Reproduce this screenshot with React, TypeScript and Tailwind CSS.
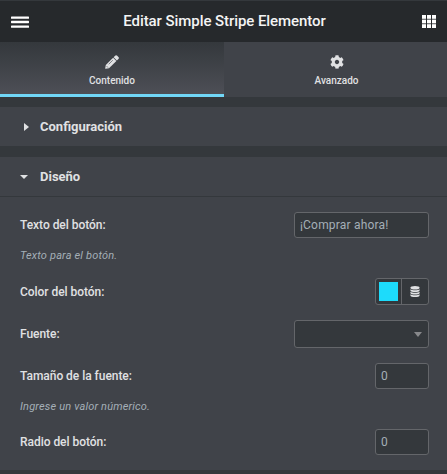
import type { ReactNode } from "react";
import { FaCog } from "react-icons/fa";

const field =
  "block h-[26px] rounded-[3px] border border-[#64666a] bg-[#34383c] px-[5px] text-[12px] tracking-[0.19px] text-[#a4afb7] outline-none";

function Row({ label, height, children }: { label: string; height: string; children: ReactNode }) {
  return (
    <div className={`flex items-center justify-between ${height}`}>
      <span className="text-[12px] leading-[14px] font-medium tracking-[-0.04px] text-[#e0e1e3]">{label}</span>
      {children}
    </div>
  );
}

function Hint({ children }: { children: ReactNode }) {
  return (
    <p className="mt-[11px] h-[13px] text-[11px] leading-[14px] tracking-[0.17px] text-[#a4afb7] italic">{children}</p>
  );
}

function Pencil() {
  return (
    <svg width="14" height="14" viewBox="0 0 14 14" fill="currentColor">
      <path d="M10.1.7a1.5 1.5 0 0 1 2.1 0l1.2 1.2a1.5 1.5 0 0 1 0 2.1l-1.5 1.5-3.3-3.3z" />
      <path d="M8.1 2.7 11.4 6 4 13.3l-3.4.5a.4.4 0 0 1-.4-.4L.8 10z" />
      <path d="M3.7 9.3 7.8 5.2M1.6 11.1l1.4 1.5" fill="none" stroke="#404246" strokeWidth="0.6" />
    </svg>
  );
}

function Section({ title, open }: { title: string; open?: boolean }) {
  return (
    <div className="flex h-[39px] items-center bg-[#404349] pl-5 text-[#e0e1e3]">
      <span className="flex w-5 items-center">
        {open ? (
          <svg width="8" height="4" viewBox="0 0 8 4" fill="currentColor" className="mt-px">
            <path d="M0 0h8L4 4z" />
          </svg>
        ) : (
          <svg width="5" height="8" viewBox="0 0 5 8" fill="currentColor" className="ml-1">
            <path d="M0 0v8l5-4z" />
          </svg>
        )}
      </span>
      <h2 className="text-[13px] leading-[15px] font-bold">{title}</h2>
    </div>
  );
}

export default function App() {
  return (
    <div className="h-[474px] w-[447px] overflow-hidden bg-[#34383c] font-['Roboto','Liberation_Sans',sans-serif]">
      <header className="flex h-[42px] items-center justify-between border-t border-[#34383c] bg-[#26292c] px-[11px] text-white">
        <button aria-label="Menu" className="pt-px">
          <svg width="18" height="12" viewBox="0 0 18 12" fill="currentColor" className="block">
            <rect y="0.4" width="18" height="2.4" rx="0.6" />
            <rect y="4.8" width="18" height="2.4" rx="0.6" />
            <rect y="9.4" width="18" height="2.4" rx="0.6" />
          </svg>
        </button>
        <h1 className="pr-[2px] pb-[2px] text-[15px] leading-[18px] font-medium tracking-[-0.07px] text-[#f4f4f4]">
          Editar Simple Stripe Elementor
        </h1>
        <button aria-label="Widgets">
          <svg width="14" height="13" viewBox="0 0 14 13" fill="currentColor" className="block">
            {[0, 4.6, 9.2].map((y) =>
              [0, 5, 10].map((x) => <rect key={`${x}-${y}`} x={x} y={y} width="4" height="3.8" />),
            )}
          </svg>
        </button>
      </header>

      <nav className="flex h-[55px] text-[10px] leading-[12px] font-medium text-[#e0e1e3]">
        <button className="flex w-[224px] flex-col items-center border-b-[3px] border-[#71d7f7] bg-linear-to-b from-[#34383c] to-[#4d4f56] pt-[13px]">
          <Pencil />
          <span className="mt-[6px]">Contenido</span>
        </button>
        <button className="flex flex-1 flex-col items-center bg-[#404349] pt-[13px] pl-[2px]">
          <FaCog size={14} />
          <span className="mt-[6px]">Avanzado</span>
        </button>
      </nav>

      <main className="flex flex-col gap-[11px] pt-[10px]">
        <Section title="Configuración" />
        <section>
          <Section title="Diseño" open />
          <div className="mt-px h-[273px] bg-[#404349] pt-[15px] pr-[18px] pl-5">
            <Row label="Texto del botón:" height="h-[26px]">
              <input className={`${field} w-[135px]`} defaultValue="¡Comprar ahora!" />
            </Row>
            <Hint>Texto para el botón.</Hint>
            <div className="mt-4">
              <Row label="Color del botón:" height="h-[27px]">
                <div className="flex h-[27px] w-[54px] rounded-[3px] border border-[#64666a] bg-[#34383c]">
                  <div className="w-[26px] border-r border-[#64666a] p-[3px]">
                    <div className="size-[19px] bg-[#1ddbfb]" />
                  </div>
                  <button aria-label="Dynamic" className="flex flex-1 items-center justify-center text-[#e0e1e3]">
                    <svg width="10" height="11" viewBox="0 0 10 11" fill="currentColor">
                      <ellipse cx="5" cy="1.8" rx="4.6" ry="1.8" />
                      <path d="M.4 3.2c1.8 1.4 7.4 1.4 9.2 0v1.2c0 2-9.2 2-9.2 0z" />
                      <path d="M.4 5.7c1.8 1.4 7.4 1.4 9.2 0v1.2c0 2-9.2 2-9.2 0z" />
                      <path d="M.4 8.2c1.8 1.4 7.4 1.4 9.2 0v1.2c0 2-9.2 2-9.2 0z" />
                    </svg>
                  </button>
                </div>
              </Row>
            </div>
            <div className="mt-[15px]">
              <Row label="Fuente:" height="h-[28px]">
                <button
                  aria-label="Fuente"
                  className="flex h-[28px] w-[135px] items-center justify-end rounded-[3px] border border-[#64666a] bg-[#34383c] pr-[6px] text-[#88898c]"
                >
                  <svg width="8" height="5" viewBox="0 0 8 5" fill="currentColor">
                    <path d="M0 0h8L4 5z" />
                  </svg>
                </button>
              </Row>
            </div>
            <div className="mt-[15px]">
              <Row label="Tamaño de la fuente:" height="h-[26px]">
                <input className={`${field} w-[54px]`} defaultValue="0" />
              </Row>
            </div>
            <Hint>Ingrese un valor númerico.</Hint>
            <div className="mt-4">
              <Row label="Radio del botón:" height="h-[26px]">
                <input className={`${field} w-[54px]`} defaultValue="0" />
              </Row>
            </div>
          </div>
        </section>
      </main>
    </div>
  );
}
